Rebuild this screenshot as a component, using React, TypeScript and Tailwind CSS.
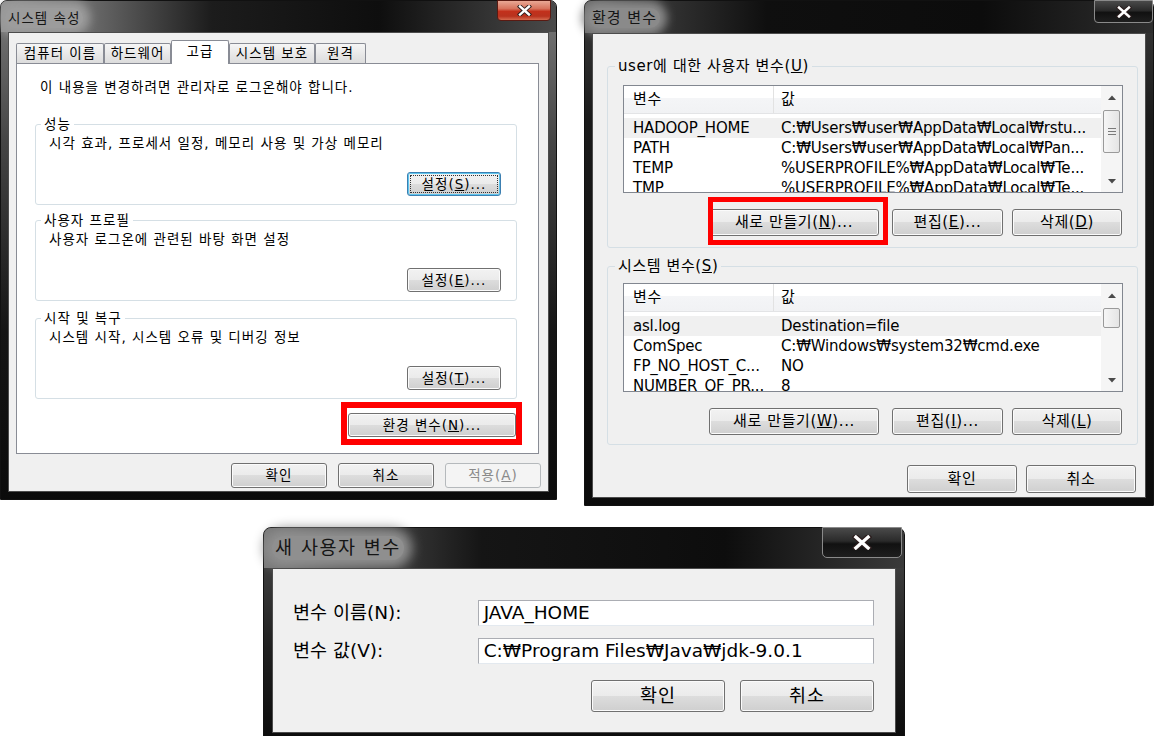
import React from 'react'

const ROWS_USER: [string, string][] = [
  ['HADOOP_HOME', 'C:₩Users₩user₩AppData₩Local₩rstu...'],
  ['PATH', 'C:₩Users₩user₩AppData₩Local₩Pan...'],
  ['TEMP', '%USERPROFILE%₩AppData₩Local₩Te...'],
  ['TMP', '%USERPROFILE%₩AppData₩Local₩Te...'],
]

const ROWS_SYS: [string, string][] = [
  ['asl.log', 'Destination=file'],
  ['ComSpec', 'C:₩Windows₩system32₩cmd.exe'],
  ['FP_NO_HOST_C...', 'NO'],
  ['NUMBER_OF_PR...', '8'],
]

function XGlyph({ w, h }: { w: number; h: number }) {
  return (
    <svg width={w} height={h} viewBox="0 0 14 11">
      <path d="M2.5 1.5 L11.5 9.5 M11.5 1.5 L2.5 9.5" stroke="#2b1d1d" strokeWidth="4.2" strokeLinecap="square" />
      <path d="M2.5 1.5 L11.5 9.5 M11.5 1.5 L2.5 9.5" stroke="#ffffff" strokeWidth="2.4" strokeLinecap="square" />
    </svg>
  )
}

function Tri({ up }: { up?: boolean }) {
  return (
    <svg width="8" height="5" viewBox="0 0 8 5">
      <path d={up ? 'M0 5 L4 0.5 L8 5 Z' : 'M0 0 L4 4.5 L8 0 Z'} fill="#4a4a4a" />
    </svg>
  )
}

function Btn({
  children,
  className = '',
  disabled = false,
  focus = false,
}: {
  children: React.ReactNode
  className?: string
  disabled?: boolean
  focus?: boolean
}) {
  const look = disabled
    ? 'border-[#b5b9bc] bg-[#f4f4f4] text-[#8a8a8a]'
    : focus
      ? 'border-[#3c7fb1] bg-[linear-gradient(180deg,#f2f2f2_0%,#ebebeb_49%,#dddddd_50%,#cfcfcf_100%)] shadow-[inset_0_0_0_1px_#5fc6ef]'
      : 'border-[#707070] bg-[linear-gradient(180deg,#f2f2f2_0%,#ebebeb_49%,#dddddd_50%,#cfcfcf_100%)] shadow-[inset_0_0_0_1px_#fbfbfb]'
  return (
    <div className={`flex shrink-0 rounded-[3px] border p-[2px] ${look} ${className}`}>
      <div
        className={`flex flex-1 items-center justify-center border ${
          focus ? 'border-dotted border-[#333]' : 'border-transparent'
        }`}
      >
        {children}
      </div>
    </div>
  )
}

function Scroll({ thumb, grip }: { thumb: string; grip?: boolean }) {
  return (
    <div className="flex w-[21px] shrink-0 flex-col bg-[#f5f5f5]">
      <div className="flex h-[22px] shrink-0 items-center justify-center">
        <Tri up />
      </div>
      <div
        className={`mx-[2px] mt-[2px] flex shrink-0 flex-col items-center justify-center gap-[2px] rounded-[2px] border border-[#9a9a9a] bg-[linear-gradient(90deg,#f6f6f6,#e4e4e4)] ${thumb}`}
      >
        {grip && (
          <>
            <div className="h-[1px] w-[8px] bg-[#7a7a7a]" />
            <div className="h-[1px] w-[8px] bg-[#7a7a7a]" />
            <div className="h-[1px] w-[8px] bg-[#7a7a7a]" />
          </>
        )}
      </div>
      <div className="flex-1" />
      <div className="flex h-[22px] shrink-0 items-center justify-center">
        <Tri />
      </div>
    </div>
  )
}

function EnvList({ rows, height, thumb, grip }: { rows: [string, string][]; height: string; thumb: string; grip?: boolean }) {
  return (
    <div className={`flex overflow-hidden border border-[#828790] bg-white ${height}`}>
      <div className="flex min-w-0 flex-1 flex-col">
        <div className="flex h-[28px] shrink-0 border-b border-[#e3e4e6] bg-[linear-gradient(180deg,#ffffff_0%,#ffffff_45%,#f4f5f7_46%,#f1f2f4_100%)]">
          <div className="flex w-[150px] items-center border-r border-[#e2e2e2] pl-[9px]">변수</div>
          <div className="flex flex-1 items-center pl-[7px]">값</div>
        </div>
        <div className="pt-[4px] tracking-[-0.2px]">
          {rows.map((r, i) => (
            <div
              key={r[0]}
              className={`flex h-[20px] items-center whitespace-nowrap ${i === 0 ? 'bg-[#f0f0f0]' : ''}`}
            >
              <div className="w-[150px] shrink-0 pl-[9px]">{r[0]}</div>
              <div className="pl-[7px]">{r[1]}</div>
            </div>
          ))}
        </div>
      </div>
      <Scroll thumb={thumb} grip={grip} />
    </div>
  )
}

function Group1({ label, desc, btn, focus, className }: { label: string; desc: string; btn: React.ReactNode; focus?: boolean; className: string }) {
  return (
    <fieldset className={`ml-[18px] w-[482px] rounded-[3px] border border-[#d5dfe5] ${className}`}>
      <legend className="ml-[5px] px-[3px] leading-[16px]">{label}</legend>
      <div className="flex flex-col pb-[8px] pl-[13px] pr-[15px]">
        <div className="mt-[2px] leading-[18px]">{desc}</div>
        <Btn focus={focus} className="mt-[20px] h-[24px] w-[94px] self-end">
          {btn}
        </Btn>
      </div>
    </fieldset>
  )
}

function SystemProps() {
  const tabOff =
    'flex h-[20px] items-center justify-center rounded-t-[2px] border border-b-0 border-[#898c95] bg-[linear-gradient(180deg,#f6f6f6_0%,#e9e9e9_50%,#dcdcdc_100%)]'
  return (
    <div className="absolute left-0 top-0 flex h-[500px] w-[557px] flex-col rounded-t-[7px] border border-[#111] bg-[linear-gradient(180deg,#7a7a7a_0px,#454545_140px,#151515_330px,#0b0b0b_100%)] text-[13.5px] tracking-[1px]">
      <div className="flex h-[31px] shrink-0 items-start justify-between rounded-t-[6px] bg-[linear-gradient(90deg,#939393_0%,#6a6a6a_16%,#1c1c1c_38%,#0e0e0e_68%,#4a4a4a_100%)]">
        <span className="ml-[4px] mt-[7px] rounded-full bg-[#9c9c9c] px-[3px] leading-[20px] text-[#151515] shadow-[0_0_10px_7px_#9c9c9c]">
          시스템 속성
        </span>
        <div className="-mt-[1px] mr-[5px] flex h-[21px] w-[54px] items-center justify-center rounded-b-[4px] border border-[#5a1a12] bg-[linear-gradient(180deg,#e9a895_0%,#d7735d_40%,#c2301c_55%,#b9321e_80%,#d56a4f_100%)]">
          <XGlyph w={15} h={11} />
        </div>
      </div>
      <div className="mx-[7px] mb-[7px] flex flex-1 flex-col border border-[#4c4c4c] bg-[#f0f0f0]">
        <div className="flex h-[30px] shrink-0 items-end pl-[7px]">
          <div className={`${tabOff} w-[88px]`}>컴퓨터 이름</div>
          <div className={`${tabOff} w-[67px]`}>하드웨어</div>
          <div className="relative z-10 -mb-[1px] flex h-[24px] w-[58px] items-center justify-center rounded-t-[2px] border border-b-0 border-[#898c95] bg-white pb-[2px]">
            고급
          </div>
          <div className={`${tabOff} w-[86px]`}>시스템 보호</div>
          <div className={`${tabOff} w-[51px]`}>원격</div>
        </div>
        <div className="ml-[7px] mr-[9px] flex h-[391px] flex-col border border-[#898c95] bg-white">
          <div className="mt-[13px] pl-[23px] leading-[20px]">이 내용을 변경하려면 관리자로 로그온해야 합니다.</div>
          <Group1
            className="mt-[19px]"
            label="성능"
            desc="시각 효과, 프로세서 일정, 메모리 사용 및 가상 메모리"
            focus
            btn={
              <>
                설정(<u>S</u>)...
              </>
            }
          />
          <Group1
            className="mt-[7px]"
            label="사용자 프로필"
            desc="사용자 로그온에 관련된 바탕 화면 설정"
            btn={
              <>
                설정(<u>E</u>)...
              </>
            }
          />
          <Group1
            className="mt-[9px]"
            label="시작 및 복구"
            desc="시스템 시작, 시스템 오류 및 디버깅 정보"
            btn={
              <>
                설정(<u>T</u>)...
              </>
            }
          />
          <Btn className="mr-[22px] mt-[14px] h-[24px] w-[168px] self-end">
            환경 변수(<u>N</u>)...
          </Btn>
        </div>
        <div className="mt-[9px] flex justify-end gap-[11px] pr-[7px]">
          <Btn className="h-[25px] w-[96px]">확인</Btn>
          <Btn className="h-[25px] w-[96px]">취소</Btn>
          <Btn disabled className="h-[25px] w-[96px]">
            적용(<u>A</u>)
          </Btn>
        </div>
      </div>
    </div>
  )
}

function EnvVars() {
  return (
    <div className="absolute left-[584px] top-0 flex h-[506px] w-[570px] flex-col rounded-t-[7px] border border-[#111] bg-[linear-gradient(180deg,#3a3a3a_0px,#1a1a1a_120px,#0b0b0b_100%)] text-[15px] tracking-[0.6px]">
      <div className="flex h-[32px] shrink-0 items-start justify-between rounded-t-[6px] bg-[linear-gradient(90deg,#6a6a6a_0%,#333333_14%,#0f0f0f_32%,#0c0c0c_70%,#2e2e2e_100%)]">
        <span className="ml-[4px] mt-[7px] rounded-full bg-[#8a8a8a] px-[3px] leading-[20px] tracking-[1px] text-[#151515] shadow-[0_0_10px_7px_#8a8a8a]">
          환경 변수
        </span>
        <div className="-mt-[1px] mr-0 flex h-[23px] w-[59px] items-center justify-center rounded-b-[4px] border border-[#8a8a8a] bg-[linear-gradient(180deg,#4a4a4a_0%,#2a2a2a_45%,#111111_55%,#1e1e1e_100%)]">
          <XGlyph w={16} h={12} />
        </div>
      </div>
      <div className="mx-[7px] mb-[7px] flex flex-1 flex-col border border-[#4c4c4c] bg-[#f0f0f0]">
        <fieldset className="ml-[14px] mt-[22px] w-[531px] rounded-[3px] border border-[#d5dfe5]">
          <legend className="ml-[7px] px-[3px] leading-[20px]">
            user에 대한 사용자 변수(<u>U</u>)
          </legend>
          <div className="flex flex-col pb-[11px] pl-[15px] pr-[14px]">
            <EnvList rows={ROWS_USER} height="mt-[9px] h-[108px]" thumb="h-[43px]" grip />
            <div className="mt-[16px] flex justify-end pr-[1px]">
              <Btn className="h-[27px] w-[170px]">
                새로 만들기(<u>N</u>)...
              </Btn>
              <Btn className="ml-[13px] h-[27px] w-[111px]">
                편집(<u>E</u>)...
              </Btn>
              <Btn className="ml-[9px] h-[27px] w-[110px]">
                삭제(<u>D</u>)
              </Btn>
            </div>
          </div>
        </fieldset>
        <fieldset className="ml-[14px] mt-[8px] w-[531px] rounded-[3px] border border-[#d5dfe5]">
          <legend className="ml-[7px] px-[3px] leading-[20px]">
            시스템 변수(<u>S</u>)
          </legend>
          <div className="flex flex-col pb-[9px] pl-[15px] pr-[14px]">
            <EnvList rows={ROWS_SYS} height="mt-[7px] h-[109px]" thumb="h-[20px]" />
            <div className="mt-[16px] flex justify-end pr-[1px]">
              <Btn className="h-[27px] w-[170px]">
                새로 만들기(<u>W</u>)...
              </Btn>
              <Btn className="ml-[13px] h-[27px] w-[111px]">
                편집(<u>I</u>)...
              </Btn>
              <Btn className="ml-[9px] h-[27px] w-[110px]">
                삭제(<u>L</u>)
              </Btn>
            </div>
          </div>
        </fieldset>
        <div className="mt-[20px] flex justify-end gap-[9px] pr-[9px]">
          <Btn className="h-[28px] w-[110px]">확인</Btn>
          <Btn className="h-[28px] w-[110px]">취소</Btn>
        </div>
      </div>
    </div>
  )
}

function NewUserVar() {
  return (
    <div className="absolute left-[263px] top-[527px] flex h-[215px] w-[642px] flex-col rounded-t-[8px] border border-[#111] bg-[linear-gradient(180deg,#4a4a4a_0px,#202020_120px,#0b0b0b_100%)] text-[18.5px]">
      <div className="flex h-[40px] shrink-0 items-start justify-between rounded-t-[7px] bg-[linear-gradient(90deg,#7a7a7a_0%,#454545_16%,#151515_34%,#0d0d0d_72%,#3a3a3a_100%)]">
        <span className="ml-[8px] mt-[8px] rounded-full bg-[#8f8f8f] px-[3px] leading-[24px] tracking-[1.5px] text-[#151515] shadow-[0_0_12px_8px_#8f8f8f]">
          새 사용자 변수
        </span>
        <div className="-mt-[1px] mr-[2px] flex h-[31px] w-[80px] items-center justify-center rounded-b-[5px] border border-[#8a8a8a] bg-[linear-gradient(180deg,#4a4a4a_0%,#2a2a2a_45%,#111111_55%,#1e1e1e_100%)]">
          <XGlyph w={20} h={15} />
        </div>
      </div>
      <div className="mx-[8px] mb-[8px] flex flex-1 flex-col border border-[#4c4c4c] bg-[#f0f0f0] pl-[20px] pr-[21px] pt-[31px]">
        <div className="flex items-center">
          <div className="w-[185px] leading-[24px]">변수 이름(N):</div>
          <div className="flex h-[26px] w-[397px] items-center border border-[#abadb3] border-b-[#e3e9ef] bg-white pl-[5px]">
            JAVA_HOME
          </div>
        </div>
        <div className="mt-[12px] flex items-center">
          <div className="w-[185px] leading-[24px]">변수 값(V):</div>
          <div className="flex h-[26px] w-[397px] items-center whitespace-nowrap border border-[#abadb3] border-b-[#e3e9ef] bg-white pl-[5px]">
            C:₩Program Files₩Java₩jdk-9.0.1
          </div>
        </div>
        <div className="mt-[16px] flex justify-end gap-[15px]">
          <Btn className="h-[32px] w-[134px] tracking-[1px]">확인</Btn>
          <Btn className="h-[32px] w-[134px] tracking-[1px]">취소</Btn>
        </div>
      </div>
    </div>
  )
}

export default function App() {
  return (
    <div className="relative h-[736px] w-[1162px] overflow-hidden bg-white font-['DejaVu_Sans','Noto_Sans_CJK_KR',sans-serif] text-black">
      <SystemProps />
      <EnvVars />
      <NewUserVar />
      {/* red annotation boxes drawn over the screenshot */}
      <div className="pointer-events-none absolute left-[341px] top-[402px] h-[43px] w-[181px] border-[6px] border-[#ff0000]" />
      <div className="pointer-events-none absolute left-[708px] top-[197px] h-[48px] w-[180px] border-[5px] border-[#ff0000]" />
    </div>
  )
}
